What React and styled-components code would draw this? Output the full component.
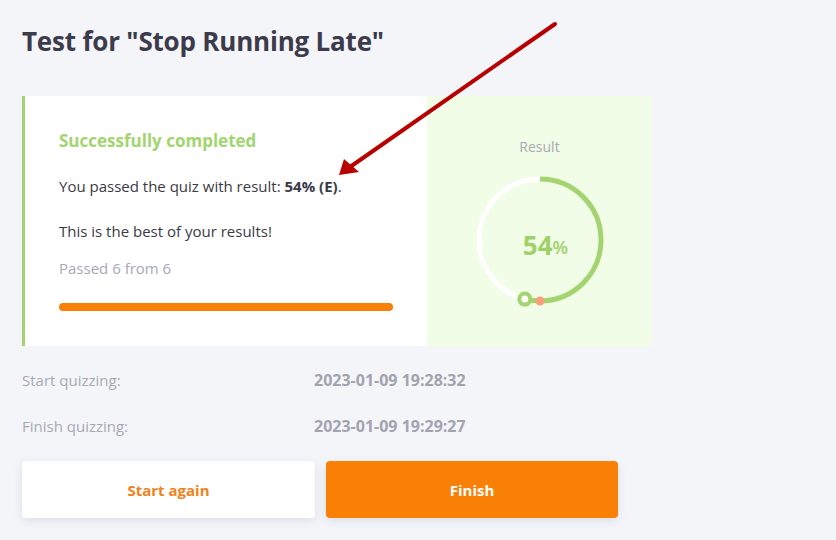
import React from 'react';
import styled, { createGlobalStyle } from 'styled-components';

const GlobalStyle = createGlobalStyle`
  html, body {
    margin: 0;
    padding: 0;
    background: #f4f5f9;
    font-family: "Open Sans", "Noto Sans", sans-serif;
  }
`;

const Page = styled.div`
  position: relative;
  width: 836px;
  height: 540px;
  padding: 24px 22px 0;
  box-sizing: border-box;
  overflow: hidden;
`;

const Title = styled.h1`
  margin: 0 0 37px;
  font-size: 26px;
  line-height: 35px;
  font-weight: 700;
  color: #3c3b4c;
  letter-spacing: -0.2px;
`;

const Card = styled.div`
  display: flex;
  width: 630px;
  height: 250px;
`;

const Summary = styled.div`
  flex: 0 0 405px;
  box-sizing: border-box;
  background: #fff;
  border-left: 3px solid #a3d46f;
  padding: 33px 34px 0 34px;
`;

const Status = styled.div`
  font-size: 17px;
  font-weight: 700;
  color: #a3d46f;
  line-height: 24px;
  margin-bottom: 22px;
`;

const Text = styled.p`
  margin: 0 0 ${p => p.gap || 0}px;
  font-size: 15px;
  line-height: 22px;
  color: ${p => (p.muted ? '#a9a9b3' : '#3a3a44')};

  b {
    font-weight: 700;
    color: #3a3a48;
  }
`;

const Bar = styled.div`
  margin-top: 24px;
  width: 334px;
  height: 8px;
  border-radius: 4px;
  background: #f98006;
`;

const ResultPane = styled.div`
  flex: 1;
  background: #f1fde6;
  display: flex;
  flex-direction: column;
  align-items: center;
  padding-top: 41px;
`;

const ResultLabel = styled.div`
  font-size: 14px;
  line-height: 20px;
  color: #a9a9b3;
  margin-bottom: 15px;
`;

const Gauge = styled.div`
  position: relative;
  width: 136px;
  height: 136px;
`;

const GaugeValue = styled.div`
  position: absolute;
  inset: 0;
  display: flex;
  align-items: center;
  justify-content: center;
  padding: 10px 0 0 12px;
  color: #9fd06a;
  font-weight: 700;
  font-size: 26px;

  small {
    font-size: 18px;
    font-weight: 600;
    margin-top: 4px;
  }
`;

const Meta = styled.div`
  display: grid;
  grid-template-columns: 292px auto;
  row-gap: 24px;
  margin-top: 23px;
  font-size: 15px;
  line-height: 22px;
`;

const MetaLabel = styled.div`
  color: #a9a9b3;
`;

const MetaValue = styled.div`
  color: #a3a3af;
  font-weight: 700;
  font-size: 16px;
`;

const Buttons = styled.div`
  display: flex;
  gap: 11px;
  margin-top: 24px;
`;

const Button = styled.button`
  width: ${p => p.w}px;
  height: 57px;
  border: none;
  border-radius: 4px;
  font-family: inherit;
  font-size: 15px;
  font-weight: 700;
  cursor: pointer;
  background: ${p => (p.primary ? '#f98006' : '#fff')};
  color: ${p => (p.primary ? '#fff' : '#f0821a')};
  box-shadow: 0 3px 10px rgba(40, 40, 70, 0.1);
`;

const Annotation = styled.svg`
  position: absolute;
  left: 0;
  top: 0;
  pointer-events: none;
`;

function ResultGauge({ percent }) {
  const r = 61;
  const c = 68;
  const circ = 2 * Math.PI * r;
  const angle = (percent / 100) * 2 * Math.PI;
  const mx = c + r * Math.sin(angle);
  const my = c - r * Math.cos(angle);
  return (
    <Gauge>
      <svg width="136" height="136" viewBox="0 0 136 136">
        <circle cx={c} cy={c} r={r} fill="none" stroke="#fff" strokeWidth="5" />
        <circle
          cx={c}
          cy={c}
          r={r}
          fill="none"
          stroke="#a3d46f"
          strokeWidth="5"
          strokeDasharray={`${(circ * percent) / 100} ${circ}`}
          transform={`rotate(-90 ${c} ${c})`}
        />
        <circle cx={c} cy={c + r} r="4.5" fill="#f8a07c" />
        <circle cx={mx} cy={my} r="5.5" fill="#fff" stroke="#a3d46f" strokeWidth="4" />
      </svg>
      <GaugeValue>
        {percent}
        <small>%</small>
      </GaugeValue>
    </Gauge>
  );
}

export default function App() {
  return (
    <Page>
      <GlobalStyle />
      <Title>Test for "Stop Running Late"</Title>
      <Card>
        <Summary>
          <Status>Successfully completed</Status>
          <Text gap={23}>
            You passed the quiz with result: <b>54% (E)</b>.
          </Text>
          <Text gap={15}>This is the best of your results!</Text>
          <Text muted>Passed 6 from 6</Text>
          <Bar />
        </Summary>
        <ResultPane>
          <ResultLabel>Result</ResultLabel>
          <ResultGauge percent={54} />
        </ResultPane>
      </Card>
      <Meta>
        <MetaLabel>Start quizzing:</MetaLabel>
        <MetaValue>2023-01-09 19:28:32</MetaValue>
        <MetaLabel>Finish quizzing:</MetaLabel>
        <MetaValue>2023-01-09 19:29:27</MetaValue>
      </Meta>
      <Buttons>
        <Button w={293}>Start again</Button>
        <Button w={292} primary>Finish</Button>
      </Buttons>
      <Annotation width="836" height="540" viewBox="0 0 836 540">
        <line x1="555" y1="24" x2="350" y2="167" stroke="#b80000" strokeWidth="4" strokeLinecap="round" />
        <polygon points="339,175 344,159 359,172" fill="#b80000" />
      </Annotation>
    </Page>
  );
}
